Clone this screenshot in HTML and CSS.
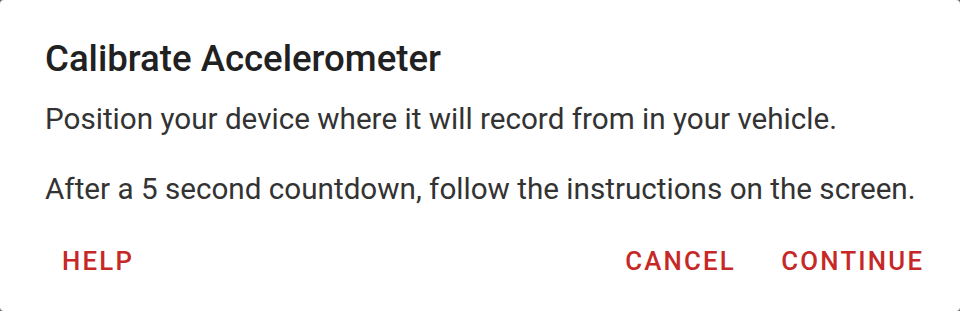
FILE: index.html
```html
<!DOCTYPE html>
<html>
<head>
<meta charset="utf-8">
<link rel="stylesheet" href="styles.css">
</head>
<body>
<div class="dialog">
  <h1 class="title">Calibrate Accelerometer</h1>
  <p class="msg msg-first">Position your device where it will record from in your vehicle.</p>
  <p class="msg">After a 5 second countdown, follow the instructions on the screen.</p>
  <div class="actions">
    <button class="btn">HELP</button>
    <div class="spacer"></div>
    <button class="btn">CANCEL</button>
    <button class="btn">CONTINUE</button>
  </div>
</div>
</body>
</html>
```
FILE: styles.css
```css
html, body {
  margin: 0;
  padding: 0;
  background: #6b6b6b;
  width: 960px;
  height: 311px;
  overflow: hidden;
}
.dialog {
  box-sizing: border-box;
  width: 960px;
  height: 311px;
  background: #fff;
  border-radius: 4px;
  padding: 37px 0 0 45px;
  font-family: Roboto, "Noto Sans", sans-serif;
}
.title {
  margin: 0;
  font-size: 36.6px;
  line-height: 44px;
  font-weight: 500;
  color: #212121;
}
.msg {
  margin: 30px 0 0 0;
  font-size: 29.65px;
  line-height: 40px;
  font-weight: 400;
  color: #333;
}
.msg-first {
  margin-top: 18px;
}
.actions {
  display: flex;
  align-items: center;
  margin: 37px 0 0 -45px;
  padding: 0 35.8px 0 62px;
}
.spacer {
  flex: 1;
}
.btn {
  background: none;
  border: 0;
  padding: 0;
  margin: 0;
  font-family: Roboto, "Noto Sans", sans-serif;
  font-size: 25.8px;
  line-height: 30px;
  font-weight: 500;
  letter-spacing: 2.2px;
  color: #c62828;
}
.btn + .btn {
  margin-left: 45.3px;
}
```
